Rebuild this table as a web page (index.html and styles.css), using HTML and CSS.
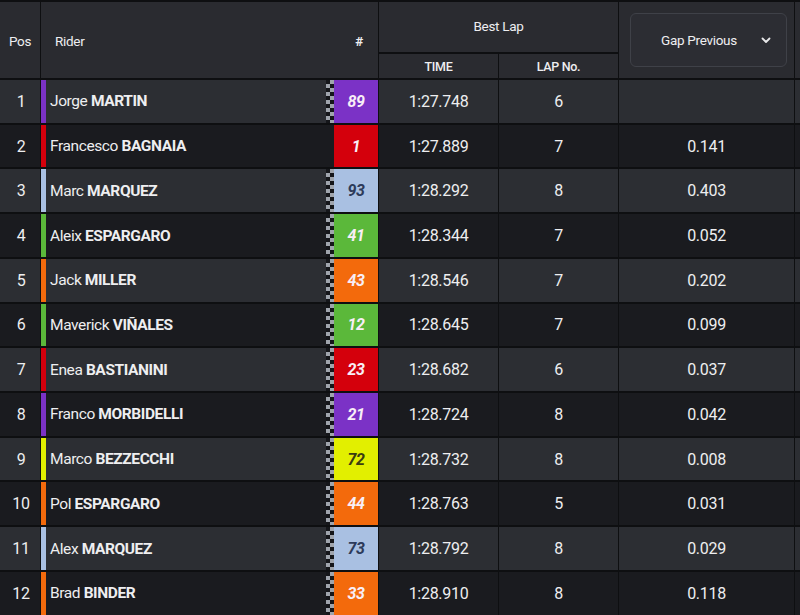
FILE: index.html
```html
<!DOCTYPE html>
<html>
<head>
<meta charset="utf-8">
<link rel="stylesheet" href="styles.css">
</head>
<body>
<div class="table">
  <div class="h h-pos">Pos</div>
  <div class="h h-rider"><span>Rider</span><span class="hash">#</span></div>
  <div class="h h-best">Best Lap</div>
  <div class="h h-gap">
    <div class="dropdown"><span>Gap Previous</span>
      <svg class="chev" width="10" height="7" viewBox="0 0 10 7"><path d="M1.5 1.5 L5 5 L8.5 1.5" fill="none" stroke="#e8e8ea" stroke-width="1.8" stroke-linecap="round" stroke-linejoin="round"/></svg>
    </div>
  </div>
  <div class="h h-extra"></div>
  <div class="h h-sub h-time">TIME</div>
  <div class="h h-sub h-lap">LAP No.</div>

  <div class="c pos odd">1</div>
  <div class="c rider odd"><i class="bar purple"></i><span class="name">Jorge <b>MARTIN</b></span><i class="chk"></i><span class="num purple">89</span></div>
  <div class="c odd">1:27.748</div><div class="c odd">6</div><div class="c odd"></div><div class="c odd"></div>

  <div class="c pos even">2</div>
  <div class="c rider even"><i class="bar red"></i><span class="name">Francesco <b>BAGNAIA</b></span><span class="num red">1</span></div>
  <div class="c even">1:27.889</div><div class="c even">7</div><div class="c even">0.141</div><div class="c even"></div>

  <div class="c pos odd">3</div>
  <div class="c rider odd"><i class="bar blue"></i><span class="name">Marc <b>MARQUEZ</b></span><i class="chk"></i><span class="num blue">93</span></div>
  <div class="c odd">1:28.292</div><div class="c odd">8</div><div class="c odd">0.403</div><div class="c odd"></div>

  <div class="c pos even">4</div>
  <div class="c rider even"><i class="bar green"></i><span class="name">Aleix <b>ESPARGARO</b></span><i class="chk"></i><span class="num green">41</span></div>
  <div class="c even">1:28.344</div><div class="c even">7</div><div class="c even">0.052</div><div class="c even"></div>

  <div class="c pos odd">5</div>
  <div class="c rider odd"><i class="bar orange"></i><span class="name">Jack <b>MILLER</b></span><i class="chk"></i><span class="num orange">43</span></div>
  <div class="c odd">1:28.546</div><div class="c odd">7</div><div class="c odd">0.202</div><div class="c odd"></div>

  <div class="c pos even">6</div>
  <div class="c rider even"><i class="bar green"></i><span class="name">Maverick <b>VIÑALES</b></span><i class="chk"></i><span class="num green">12</span></div>
  <div class="c even">1:28.645</div><div class="c even">7</div><div class="c even">0.099</div><div class="c even"></div>

  <div class="c pos odd">7</div>
  <div class="c rider odd"><i class="bar red"></i><span class="name">Enea <b>BASTIANINI</b></span><i class="chk"></i><span class="num red">23</span></div>
  <div class="c odd">1:28.682</div><div class="c odd">6</div><div class="c odd">0.037</div><div class="c odd"></div>

  <div class="c pos even">8</div>
  <div class="c rider even"><i class="bar purple"></i><span class="name">Franco <b>MORBIDELLI</b></span><i class="chk"></i><span class="num purple">21</span></div>
  <div class="c even">1:28.724</div><div class="c even">8</div><div class="c even">0.042</div><div class="c even"></div>

  <div class="c pos odd">9</div>
  <div class="c rider odd"><i class="bar yellow"></i><span class="name">Marco <b>BEZZECCHI</b></span><i class="chk"></i><span class="num yellow">72</span></div>
  <div class="c odd">1:28.732</div><div class="c odd">8</div><div class="c odd">0.008</div><div class="c odd"></div>

  <div class="c pos even">10</div>
  <div class="c rider even"><i class="bar orange"></i><span class="name">Pol <b>ESPARGARO</b></span><i class="chk"></i><span class="num orange">44</span></div>
  <div class="c even">1:28.763</div><div class="c even">5</div><div class="c even">0.031</div><div class="c even"></div>

  <div class="c pos odd">11</div>
  <div class="c rider odd"><i class="bar blue"></i><span class="name">Alex <b>MARQUEZ</b></span><i class="chk"></i><span class="num blue">73</span></div>
  <div class="c odd">1:28.792</div><div class="c odd">8</div><div class="c odd">0.029</div><div class="c odd"></div>

  <div class="c pos even">12</div>
  <div class="c rider even"><i class="bar orange"></i><span class="name">Brad <b>BINDER</b></span><i class="chk"></i><span class="num orange">33</span></div>
  <div class="c even">1:28.910</div><div class="c even">8</div><div class="c even">0.118</div><div class="c even"></div>
</div>
</body>
</html>
```

FILE: styles.css
```css
html, body {
  margin: 0;
  padding: 0;
  background: #0e0f11;
  height: 615px;
  overflow: hidden;
}
body {
  font-family: Roboto, "Liberation Sans", sans-serif;
  color: #eeeef0;
}
.table {
  display: grid;
  grid-template-columns: 40px 337px 119px 119px 175px 1fr;
  grid-template-rows: 50px 24px;
  grid-auto-rows: 42.73px;
  column-gap: 1px;
  row-gap: 2px;
  padding-top: 2px;
  width: 800px;
}
.h {
  background: #2a2b30;
  font-size: 13.5px;
  display: flex;
  align-items: center;
  letter-spacing: -0.3px;
}
.h-pos {
  grid-column: 1;
  grid-row: 1 / 3;
  justify-content: center;
  padding-top: 2px;
}
.h-rider {
  grid-column: 2;
  grid-row: 1 / 3;
  justify-content: space-between;
  padding: 2px 15px 0 14px;
}
.hash { font-weight: 700; }
.h-best {
  grid-column: 3 / 5;
  grid-row: 1;
  justify-content: center;
  padding-bottom: 2px;
}
.h-gap {
  grid-column: 5;
  grid-row: 1 / 3;
  padding: 11px 7px 11px 11px;
  align-items: stretch;
}
.h-extra {
  grid-column: 6;
  grid-row: 1 / 3;
}
.h-time { grid-column: 3; grid-row: 2; }
.h-lap { grid-column: 4; grid-row: 2; }
.h-sub {
  justify-content: center;
  font-size: 12.5px;
  font-weight: 500;
}
.dropdown {
  flex: 1;
  border: 1px solid #3f4148;
  border-radius: 6px;
  background: #2c2d33;
  display: flex;
  align-items: center;
  padding: 0 15px 0 30px;
  justify-content: space-between;
  font-size: 13.5px;
}
.chev { display: block; }

.c {
  display: flex;
  align-items: center;
  justify-content: center;
  font-size: 16px;
  letter-spacing: -0.3px;
}
.odd { background: #2c2e33; }
.even { background: #1a1b1f; }
.pos { padding-left: 2px; }
.rider {
  justify-content: flex-start;
}
.bar {
  width: 5px;
  align-self: stretch;
}
.name {
  flex: 1;
  padding-left: 4px;
  font-size: 15.5px;
  letter-spacing: -0.4px;
}
.name b { font-weight: 700; }
.chk {
  width: 8px;
  align-self: stretch;
  background: repeating-conic-gradient(#a0a5ad 0 25%, #15161a 0 50%) 0 0 / 8px 8px;
}
.num {
  width: 44px;
  align-self: stretch;
  display: flex;
  align-items: center;
  justify-content: center;
  font-style: italic;
  font-weight: 700;
  font-size: 16px;
  color: #f8eef6;
}
.purple { background: #7b32c6; }
.red { background: #d4000c; }
.blue { background: #a9c0e2; }
.green { background: #5bb83a; }
.orange { background: #f36a0c; }
.yellow { background: #e2ef00; }
.num.blue { color: #2d3b5a; }
.num.yellow { color: #3a3c12; }
```
